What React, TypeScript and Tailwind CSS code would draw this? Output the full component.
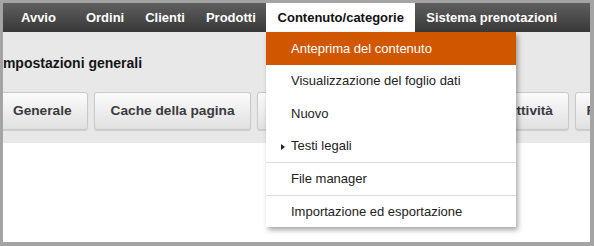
import React from "react";

const navBase = "flex items-center text-[13px] font-bold whitespace-nowrap";
const navItem = `${navBase} text-white`;

function Btn({ label, cls = "" }: { label?: string; cls?: string }) {
  return (
    <div
      className={`h-[38px] shrink-0 flex items-center rounded-[3px] border border-[#c9c9c9] bg-gradient-to-b from-[#fbfbfb] to-[#e1e1e1] shadow-[0_1px_1px_rgba(0,0,0,0.12)] text-[13.7px] font-bold text-[#3a3a3f] whitespace-nowrap ${cls}`}
    >
      {label}
    </div>
  );
}

export default function App() {
  return (
    <div className="w-[594px] h-[246px] bg-[#a4a4a4] pt-[3px] pl-[3px] pr-[4px] pb-[4px] font-['Liberation_Sans',Arial,sans-serif]">
      <div className="relative w-full h-full bg-white overflow-hidden">
        <nav className="h-[29px] flex items-stretch bg-gradient-to-b from-[#5f5f5f] to-[#383838] pl-[7.5px]">
          <div className={`${navItem} px-[10.5px]`}>Avvio</div>
          <div className={`${navItem} px-[10.5px] ml-[9px]`}>Ordini</div>
          <div className={`${navItem} px-[10.5px]`}>Clienti</div>
          <div className={`${navItem} px-[10.5px]`}>Prodotti</div>
          <div className={`${navBase} w-[149px] justify-center bg-white text-[#111111]`}>Contenuto/categorie</div>
          <div className={`${navItem} pl-[11px] pr-[10px]`}>Sistema prenotazioni</div>
        </nav>
        <div className="h-[111px] bg-[#e8e8e8] pt-[23px]">
          <div className="h-[16px] leading-[16px] text-[14px] font-bold text-[#151515] ml-[-4px] whitespace-nowrap">
            Impostazioni generali
          </div>
          <div className="mt-[21px] flex gap-[6px] ml-[-6.5px]">
            <Btn label="Generale" cls="px-[15.5px]" />
            <Btn label="Cache della pagina" cls="px-[15.5px]" />
            <Btn cls="w-[227px]" />
            <Btn label="Attività" cls="px-[15.5px]" />
            <Btn label="Fatturazione" cls="pl-[10px] pr-[15.5px]" />
          </div>
        </div>
        <div className="absolute left-[263px] top-[29px] w-[250px] bg-white shadow-[2px_3px_5px_rgba(0,0,0,0.35)] text-[13px] text-[#222] whitespace-nowrap">
          <div className="h-[33px] flex items-center pl-[25px] bg-[#d15600] text-white">Anteprima del contenuto</div>
          <div className="h-[32px] flex items-center pl-[25px]">Visualizzazione del foglio dati</div>
          <div className="h-[33px] flex items-center pl-[25px]">Nuovo</div>
          <div className="relative h-[32px] flex items-center pl-[25px]">
            <svg className="absolute left-[15px] top-[13.5px]" width="4" height="6" viewBox="0 0 4 6">
              <path d="M0 0 L4 3 L0 6 Z" fill="#222" />
            </svg>
            Testi legali
          </div>
          <div className="h-[33px] flex items-center pl-[25px] border-t border-[#dcdcdc]">File manager</div>
          <div className="h-[32px] flex items-center pl-[25px] border-t border-[#dcdcdc]">Importazione ed esportazione</div>
        </div>
      </div>
    </div>
  );
}
